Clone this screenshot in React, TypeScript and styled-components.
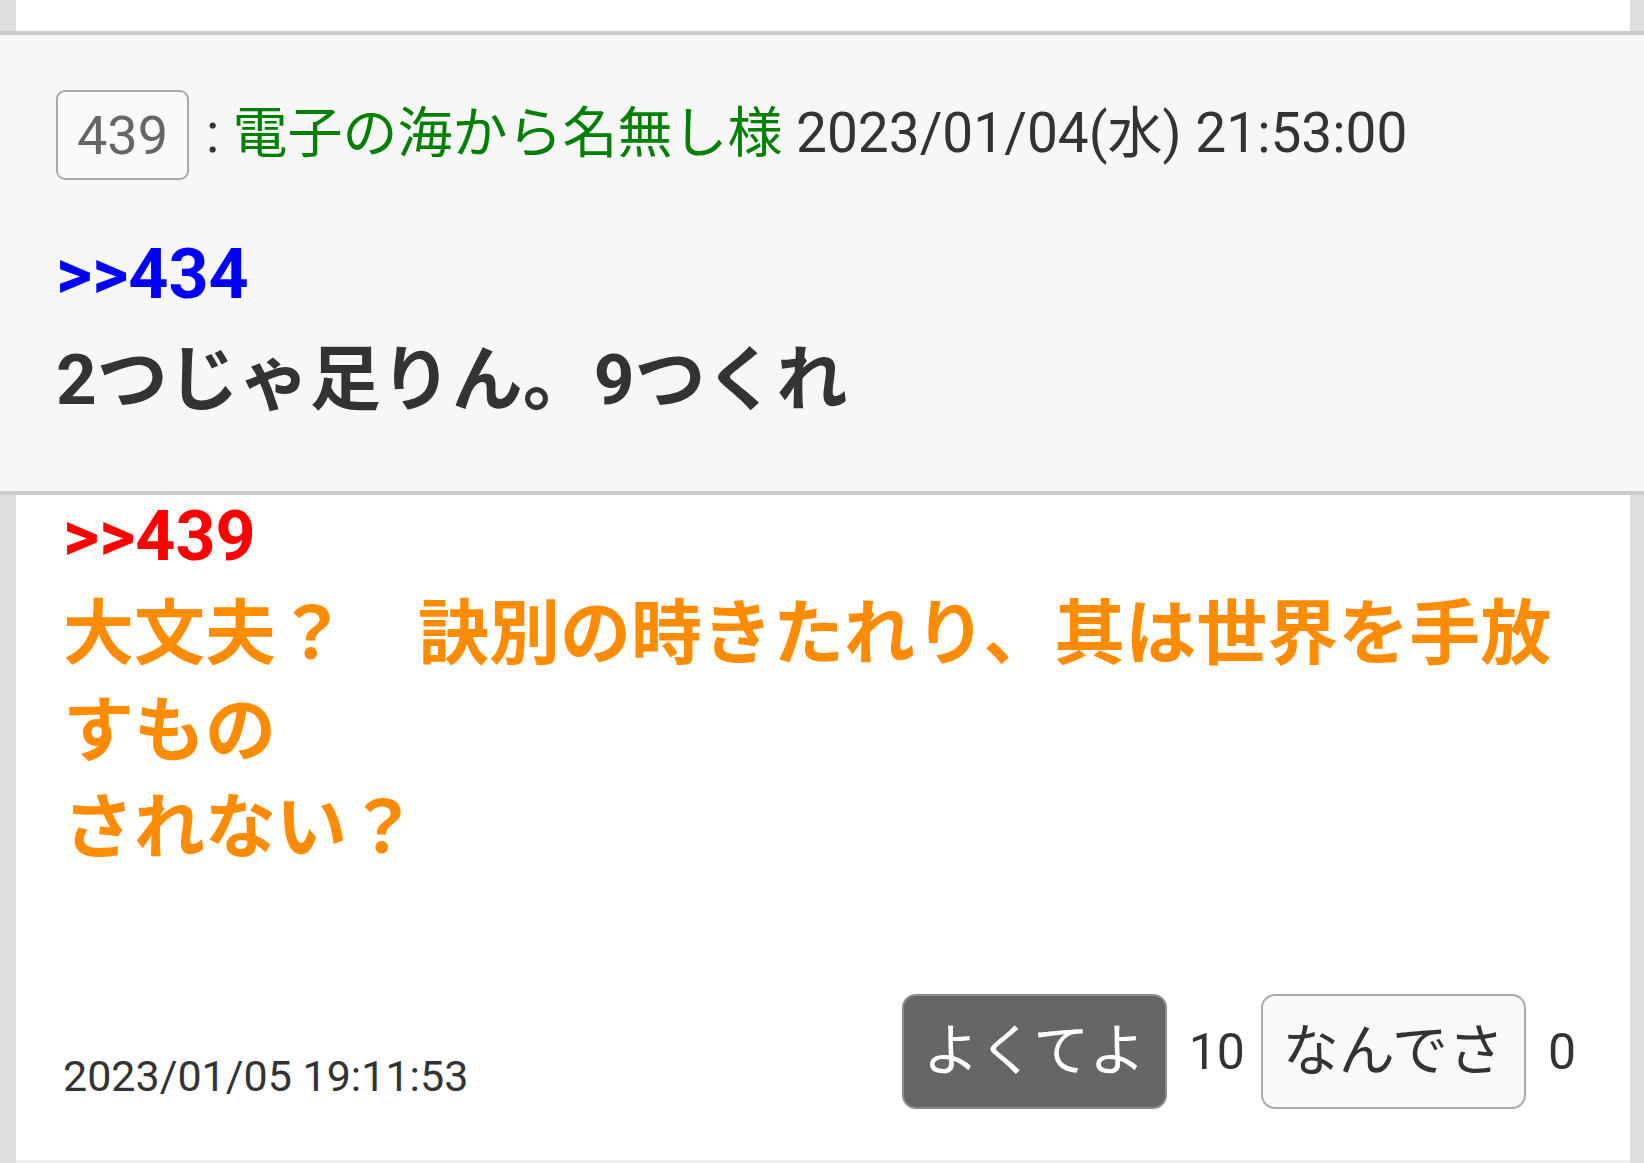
import React from "react";
import styled, { createGlobalStyle } from "styled-components";

const GlobalStyle = createGlobalStyle`
  html, body {
    margin: 0;
    padding: 0;
    background: #dedede;
  }
  body {
    font-family: Roboto, "Noto Sans CJK JP", sans-serif;
    color: #333;
  }
`;

const Page = styled.div`
  width: 1644px;
  height: 1163px;
  overflow: hidden;
  display: flex;
  flex-direction: column;
  background: #dedede;
`;

const PrevCard = styled.div`
  height: 31px;
  margin: 0 14px 0 16px;
  background: #fff;
`;

const Popup = styled.section`
  background: #f7f7f7;
  border-top: 4px solid #cbcbcb;
  border-bottom: 4px solid #cbcbcb;
  padding: 55px 56px 63px;
`;

const Header = styled.div`
  display: flex;
  align-items: center;
  font-size: 55px;
  color: #333;
  white-space: nowrap;
`;

const NumBadge = styled.span`
  box-sizing: border-box;
  height: 90px;
  display: inline-flex;
  align-items: center;
  padding: 0 19px;
  border: 2px solid #aaa;
  border-radius: 9px;
  background: #fafafa;
  color: #666;
  font-size: 54px;
`;

const Meta = styled.span`
  margin-left: 17px;
  line-height: 1;
  margin-bottom: 4px;
`;

const Name = styled.span`
  color: #008000;
  margin-left: 13px;
`;

const Anchor = styled.div<{ $color: string; $lh: number }>`
  font-size: 70px;
  font-weight: 700;
  line-height: ${(p) => p.$lh}px;
  color: ${(p) => p.$color};
`;

const BodyText = styled.div<{ $color: string }>`
  font-size: 71px;
  font-weight: 700;
  line-height: 97px;
  margin-top: 8px;
  color: ${(p) => p.$color};
`;

const QuoteAnchorWrap = styled.div`
  margin-top: 45px;
`;

const Card = styled.article`
  flex: 1;
  margin: 0 14px 0 16px;
  background: #fff;
  padding: 0 47px;
  display: flex;
  flex-direction: column;
  border-bottom: 3px solid #efefef;
`;

const Footer = styled.div`
  margin-top: 118px;
  display: flex;
  justify-content: space-between;
  align-items: flex-end;
`;

const PostDate = styled.span`
  font-size: 43px;
  line-height: 53px;
  color: #333;
  margin-bottom: 6px;
`;

const Reactions = styled.div`
  display: flex;
  align-items: center;
  margin-right: 7px;
`;

const ReactButton = styled.button<{ $active?: boolean }>`
  box-sizing: border-box;
  width: 265px;
  font-family: Roboto, "Noto Sans CJK JP", sans-serif;
  font-size: 56px;
  line-height: 75px;
  padding: 18px 0;
  border-radius: 14px;
  border: 2px solid ${(p) => (p.$active ? "#8c8c8c" : "#aaa")};
  background: ${(p) => (p.$active ? "#666" : "#f9f9f9")};
  color: ${(p) => (p.$active ? "#fff" : "#333")};
  margin: 0;
  text-align: center;
`;

const Count = styled.span`
  font-size: 50px;
  color: #333;
  margin: 0 16px 0 22px;
  &:last-child {
    margin-right: 0;
  }
`;

export default function App() {
  return (
    <>
      <GlobalStyle />
      <Page>
        <PrevCard />
        <Popup>
          <Header>
            <NumBadge>439</NumBadge>
            <Meta>
              :<Name>電子の海から名無し様</Name> 2023/01/04(水) 21:53:00
            </Meta>
          </Header>
          <QuoteAnchorWrap>
            <Anchor $color="#0000ff" $lh={98}>&gt;&gt;434</Anchor>
          </QuoteAnchorWrap>
          <BodyText $color="#333">2つじゃ足りん。9つくれ</BodyText>
        </Popup>
        <Card>
          <Anchor $color="#ff0000" $lh={82}>&gt;&gt;439</Anchor>
          <BodyText $color="#ff8c00">
            大文夫？　訣別の時きたれり、其は世界を手放すもの
            <br />
            されない？
          </BodyText>
          <Footer>
            <PostDate>2023/01/05 19:11:53</PostDate>
            <Reactions>
              <ReactButton $active>よくてよ</ReactButton>
              <Count>10</Count>
              <ReactButton>なんでさ</ReactButton>
              <Count>0</Count>
            </Reactions>
          </Footer>
        </Card>
      </Page>
    </>
  );
}
